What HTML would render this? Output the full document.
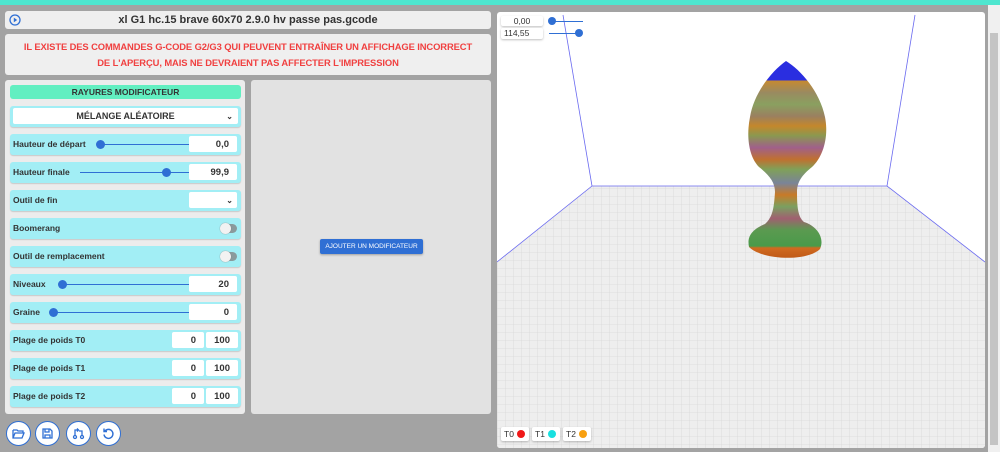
<!DOCTYPE html>
<html><head><meta charset="utf-8"><style>
*{box-sizing:border-box;margin:0;padding:0}
body{width:1000px;height:452px;overflow:hidden;background:#a3a3a3;font-family:"Liberation Sans",sans-serif;position:relative;color:#333}
.top{position:absolute;left:0;top:0;width:1000px;height:5px;background:#4ee6cf}
.box{position:absolute;background:#efefef;border-radius:3px}
.title{left:5px;top:11px;width:486px;height:18px;font-size:11px;font-weight:bold;text-align:center;line-height:18px}
.warn{left:5px;top:34px;width:486px;height:41px;color:#f04040;font-size:9.4px;font-weight:bold;text-align:center;line-height:16px;padding-top:5px;white-space:nowrap;letter-spacing:-0.1px}
.lp{left:5px;top:80px;width:240px;height:334px;background:#ececec}
.rp{left:251px;top:80px;width:240px;height:334px;background:#e2e2e2}
.hdr{position:absolute;left:10px;top:85px;width:231px;height:14px;background:#62efc1;border-radius:3px;font-size:8.5px;font-weight:bold;text-align:center;line-height:14px}
.row{position:absolute;left:10px;width:231px;height:21px;background:#a2eef5;border-radius:3px;font-size:8.5px;font-weight:bold;box-shadow:0 1px 1px rgba(0,0,0,.15)}
.row .l{position:absolute;left:3px;top:0;line-height:21px}
.in{position:absolute;background:#fff;border-radius:2px;height:16px;top:2px;font-size:9.5px;text-align:right;padding-right:8px;line-height:17px;font-weight:bold}
.sl{position:absolute;top:10px;height:1px;background:#2f6fd4}
.kn{position:absolute;top:6px;width:9px;height:9px;border-radius:50%;background:#2f6fd4}
.tog{position:absolute;right:4px;top:6px;width:16px;height:9px;border-radius:5px;background:#8a9a9c}
.tog:after{content:"";position:absolute;left:-1px;top:-1px;width:11px;height:11px;border-radius:50%;background:#f2f2f2;box-shadow:0 0 1px #777}
.btn{position:absolute;top:421px;width:25px;height:25px;border-radius:50%;background:#fff;border:1.5px solid #2f6fd4}
.btn svg{position:absolute;left:5px;top:5px}
.add{position:absolute;left:320px;top:239px;width:103px;height:15px;background:#2f6fd4;color:#fff;font-size:6.5px;text-align:center;line-height:15px;border-radius:2px;box-shadow:0 1px 2px rgba(0,0,0,.3)}
.vp{position:absolute;left:497px;top:12px;width:488px;height:436px;background:#fff;border-radius:3px;overflow:hidden}
.sb{position:absolute;left:988px;top:5px;width:12px;height:447px;background:#f0f0f0}
.tag{position:absolute;background:#fff;font-size:8.5px;box-shadow:0 1px 2px rgba(0,0,0,.25);border-radius:2px}
</style></head><body>
<div class="top"></div>
<div class="box title"><svg style="position:absolute;left:4px;top:3px" width="12" height="12"><circle cx="6" cy="6" r="5" fill="none" stroke="#2f6fd4" stroke-width="1.3"/><path d="M4.8 3.6L8.2 6L4.8 8.4Z" fill="#2f6fd4"/></svg>xl G1 hc.15 brave 60x70 2.9.0 hv passe pas.gcode</div>
<div class="box warn">IL EXISTE DES COMMANDES G-CODE G2/G3 QUI PEUVENT ENTRAÎNER UN AFFICHAGE INCORRECT<br>DE L'APERÇU, MAIS NE DEVRAIENT PAS AFFECTER L'IMPRESSION</div>
<div class="box lp"></div>
<div class="box rp"></div>
<div class="hdr">RAYURES MODIFICATEUR</div>
<div class="row" style="top:106px"><div class="in" style="left:3px;width:225px;text-align:center;padding:0;font-size:9px">MÉLANGE ALÉATOIRE<span style="position:absolute;right:5px;font-size:8px">⌄</span></div></div>
<div class="row" style="top:134px"><span class="l">Hauteur de départ</span><div class="sl" style="left:90px;width:92px"></div><div class="kn" style="left:86px"></div><div class="in" style="left:179px;width:48px">0,0</div></div>
<div class="row" style="top:162px"><span class="l">Hauteur finale</span><div class="sl" style="left:70px;width:112px"></div><div class="kn" style="left:152px"></div><div class="in" style="left:179px;width:48px">99,9</div></div>
<div class="row" style="top:190px"><span class="l">Outil de fin</span><div class="in" style="left:179px;width:48px;padding-right:4px;font-size:8px">⌄</div></div>
<div class="row" style="top:218px"><span class="l">Boomerang</span><div class="tog"></div></div>
<div class="row" style="top:246px"><span class="l">Outil de remplacement</span><div class="tog"></div></div>
<div class="row" style="top:274px"><span class="l">Niveaux</span><div class="sl" style="left:52px;width:130px"></div><div class="kn" style="left:48px"></div><div class="in" style="left:179px;width:48px">20</div></div>
<div class="row" style="top:302px"><span class="l">Graine</span><div class="sl" style="left:43px;width:139px"></div><div class="kn" style="left:39px"></div><div class="in" style="left:179px;width:48px">0</div></div>
<div class="row" style="top:330px"><span class="l">Plage de poids T0</span><div class="in" style="left:162px;width:32px">0</div><div class="in" style="left:196px;width:32px">100</div></div>
<div class="row" style="top:358px"><span class="l">Plage de poids T1</span><div class="in" style="left:162px;width:32px">0</div><div class="in" style="left:196px;width:32px">100</div></div>
<div class="row" style="top:386px"><span class="l">Plage de poids T2</span><div class="in" style="left:162px;width:32px">0</div><div class="in" style="left:196px;width:32px">100</div></div>
<div class="add">AJOUTER UN MODIFICATEUR</div>
<div class="btn" style="left:6px"><svg width="13" height="13" viewBox="0 0 13 13" fill="none" stroke="#2f6fd4" stroke-width="1.3"><path d="M1 3h4l1 1h5v2M1 3v8h9l2-5H3l-2 5"/></svg></div>
<div class="btn" style="left:35px"><svg width="13" height="13" viewBox="0 0 13 13" fill="none" stroke="#2f6fd4" stroke-width="1.3"><path d="M2 2h7l2 2v7H2z M4 2v3h4V2 M4 11V8h5v3"/></svg></div>
<div class="btn" style="left:66px"><svg width="13" height="13" viewBox="0 0 13 13" fill="none" stroke="#2f6fd4" stroke-width="1.3"><circle cx="3" cy="10" r="1.5"/><circle cx="10" cy="10" r="1.5"/><path d="M3 8.5V3h3M5 1.5L6.5 3L5 4.5M10 8.5V4H7"/></svg></div>
<div class="btn" style="left:96px"><svg width="13" height="13" viewBox="0 0 13 13" fill="none" stroke="#2f6fd4" stroke-width="1.4"><path d="M3 4A4.5 4.5 0 1 1 2 7.5M2 1.5v3h3"/></svg></div>
<div class="vp">
<svg width="488" height="436" style="position:absolute;left:0;top:0">
<defs><pattern id="g" width="8" height="8" patternUnits="userSpaceOnUse"><rect width="8" height="8" fill="#eeeeee"/><path d="M0 0H8M0 0V8" stroke="#d8d8d8" stroke-width="0.8"/></pattern>
<linearGradient id="s" x1="0" y1="0" x2="0" y2="1">
<stop offset="0" stop-color="#2a2ee0"/><stop offset=".1" stop-color="#2a2ee0"/><stop offset=".1" stop-color="#c68a30"/><stop offset=".16" stop-color="#9a8a60"/><stop offset=".22" stop-color="#8aa060"/><stop offset=".28" stop-color="#9a8060"/><stop offset=".33" stop-color="#c4872c"/><stop offset=".38" stop-color="#8a9850"/><stop offset=".44" stop-color="#a0608a"/><stop offset=".5" stop-color="#c07030"/><stop offset=".55" stop-color="#80a058"/><stop offset=".62" stop-color="#7a8498"/><stop offset=".68" stop-color="#c87a28"/><stop offset=".74" stop-color="#7aa060"/><stop offset=".8" stop-color="#a06070"/><stop offset=".86" stop-color="#5a9a50"/><stop offset=".94" stop-color="#4a9a4a"/><stop offset=".95" stop-color="#d06a20"/><stop offset="1" stop-color="#c05a18"/></linearGradient></defs>
<path d="M0 250L95 174H390L488 250V436H0Z" fill="url(#g)"/>
<path d="M0 250L95 174H390L488 250" fill="none" stroke="#6a6af0" stroke-width="0.8"/>
<path d="M95 174L66 3M390 174L418 3" stroke="#6a6af0" stroke-width="0.8"/>
<path d="M289 49C276 58 257 80 253 105C249 125 252 145 262 155C272 163 278 170 278 180C277 195 276 205 268 212C254 218 250 225 252 235C265 248 310 250 323 237C328 226 320 214 307 210C301 205 300 195 300 180C300 170 305 163 315 155C326 145 332 125 328 105C323 80 304 58 289 49Z" fill="url(#s)"/>
</svg>
<div class="tag" style="left:4px;top:4px;width:42px;height:10px;text-align:center;line-height:10px">0,00</div>
<div class="tag" style="left:4px;top:16px;width:42px;height:11px;line-height:11px;padding-left:3px">114,55</div>
<div style="position:absolute;left:56px;top:9px;width:30px;height:1px;background:#2f6fd4"></div><div class="kn" style="left:51px;top:5px;width:8px;height:8px"></div>
<div style="position:absolute;left:52px;top:21px;width:30px;height:1px;background:#2f6fd4"></div><div class="kn" style="left:78px;top:17px;width:8px;height:8px"></div>
<div class="tag" style="left:4px;top:415px;width:28px;height:14px;line-height:14px;padding-left:3px">T0<span style="position:absolute;right:4px;top:3px;width:8px;height:8px;border-radius:50%;background:#f01818"></span></div>
<div class="tag" style="left:35px;top:415px;width:28px;height:14px;line-height:14px;padding-left:3px">T1<span style="position:absolute;right:4px;top:3px;width:8px;height:8px;border-radius:50%;background:#18e0e0"></span></div>
<div class="tag" style="left:66px;top:415px;width:28px;height:14px;line-height:14px;padding-left:3px">T2<span style="position:absolute;right:4px;top:3px;width:8px;height:8px;border-radius:50%;background:#f8a010"></span></div>
</div>
<div class="sb"><div style="position:absolute;left:2px;top:28px;width:8px;height:412px;background:#c4c4c4"></div></div>
</body></html>
